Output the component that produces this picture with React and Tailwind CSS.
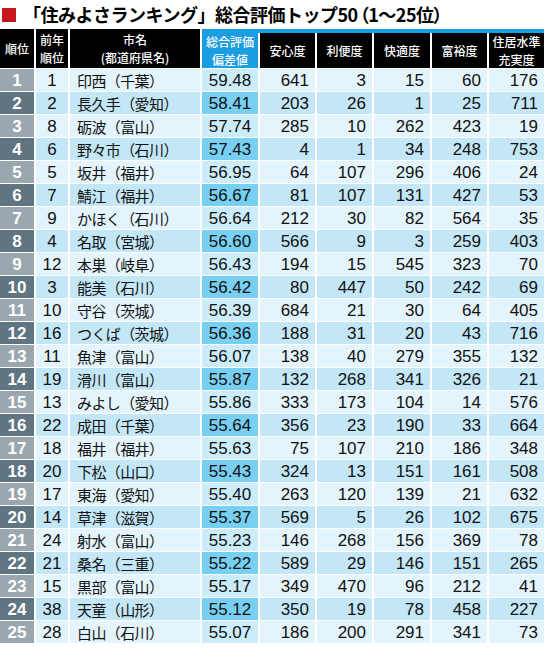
const rows = [
  [1, 1, '印西（千葉）', '59.48', 641, 3, 15, 60, 176],
  [2, 2, '長久手（愛知）', '58.41', 203, 26, 1, 25, 711],
  [3, 8, '砺波（富山）', '57.74', 285, 10, 262, 423, 19],
  [4, 6, '野々市（石川）', '57.43', 4, 1, 34, 248, 753],
  [5, 5, '坂井（福井）', '56.95', 64, 107, 296, 406, 24],
  [6, 7, '鯖江（福井）', '56.67', 81, 107, 131, 427, 53],
  [7, 9, 'かほく（石川）', '56.64', 212, 30, 82, 564, 35],
  [8, 4, '名取（宮城）', '56.60', 566, 9, 3, 259, 403],
  [9, 12, '本巣（岐阜）', '56.43', 194, 15, 545, 323, 70],
  [10, 3, '能美（石川）', '56.42', 80, 447, 50, 242, 69],
  [11, 10, '守谷（茨城）', '56.39', 684, 21, 30, 64, 405],
  [12, 16, 'つくば（茨城）', '56.36', 188, 31, 20, 43, 716],
  [13, 11, '魚津（富山）', '56.07', 138, 40, 279, 355, 132],
  [14, 19, '滑川（富山）', '55.87', 132, 268, 341, 326, 21],
  [15, 13, 'みよし（愛知）', '55.86', 333, 173, 104, 14, 576],
  [16, 22, '成田（千葉）', '55.64', 356, 23, 190, 33, 664],
  [17, 18, '福井（福井）', '55.63', 75, 107, 210, 186, 348],
  [18, 20, '下松（山口）', '55.43', 324, 13, 151, 161, 508],
  [19, 17, '東海（愛知）', '55.40', 263, 120, 139, 21, 632],
  [20, 14, '草津（滋賀）', '55.37', 569, 5, 26, 102, 675],
  [21, 24, '射水（富山）', '55.23', 146, 268, 156, 369, 78],
  [22, 21, '桑名（三重）', '55.22', 589, 29, 146, 151, 265],
  [23, 15, '黒部（富山）', '55.17', 349, 470, 96, 212, 41],
  [24, 38, '天童（山形）', '55.12', 350, 19, 78, 458, 227],
  [25, 28, '白山（石川）', '55.07', 186, 200, 291, 341, 73],
];

const jp = "font-['Noto_Sans_CJK_JP',sans-serif]";
const num = "font-['Liberation_Sans','Noto_Sans_CJK_JP',sans-serif]";
const grid = 'grid grid-cols-[34px_32px_130px_56px_55px_55px_56px_55px_55px] gap-x-[2px]';

function HeadCell({ lines, className = 'bg-black' }) {
  return (
    <div className={`flex flex-col items-center justify-center text-center text-[12px] font-medium leading-[17.5px] text-white ${className}`}>
      {lines.map((l) => (
        <span key={l} className="block">{l}</span>
      ))}
    </div>
  );
}

export default function App() {
  return (
    <div className={`h-[650px] w-[546px] overflow-hidden bg-white ${jp}`}>
      <div className="flex h-[29px] items-center pl-[2px]">
        <span className="h-[14px] w-[14px] bg-[#c8161d]" />
        <h1 className="ml-[7px] text-[18px] font-bold tracking-[-0.5px] text-black">
          「住みよさランキング」総合評価トップ50
          <span className="ml-[2px] [font-feature-settings:'palt']">（1〜25位）</span>
        </h1>
      </div>

      <div className={`${grid} h-[39px]`}>
        <HeadCell lines={['順位']} />
        <HeadCell lines={['前年', '順位']} />
        <HeadCell lines={['市名', '(都道府県名)']} />
        <div className="col-span-6 grid grid-cols-[56px_55px_55px_56px_55px_55px] gap-x-[2px] border-t-[4px] border-[#1b9de2]">
          <HeadCell lines={['総合評価', '偏差値']} className="bg-[#1b9de2]" />
          <HeadCell lines={['安心度']} />
          <HeadCell lines={['利便度']} />
          <HeadCell lines={['快適度']} />
          <HeadCell lines={['富裕度']} />
          <HeadCell lines={['住居水準', '充実度']} />
        </div>
      </div>

      <div className="mt-[1px] flex flex-col gap-y-[1px]">
        {rows.map((r) => {
          const even = r[0] % 2 === 0;
          const cell = even ? 'bg-[#c4e7f8]' : 'bg-[#e3f4fc]';
          return (
            <div key={r[0]} className={`${grid} h-[22px] text-[17px] leading-none text-[#111]`}>
              <div className={`flex items-center justify-center font-bold text-white ${num} ${even ? 'bg-[#5f7581]' : 'bg-[#9ba7ae]'}`}>
                {r[0]}
              </div>
              <div className={`flex items-center justify-center ${num} ${cell}`}>{r[1]}</div>
              <div className={`flex items-center pl-[7px] text-[15px] tracking-[-0.6px] ${cell}`}>{r[2]}</div>
              <div className={`flex items-center justify-center ${num} ${even ? 'bg-[#77cff1]' : 'bg-[#cbedfb]'}`}>{r[3]}</div>
              {r.slice(4).map((v, i) => (
                <div key={i} className={`flex items-center justify-end pr-[6px] ${num} ${cell}`}>
                  {v}
                </div>
              ))}
            </div>
          );
        })}
      </div>
    </div>
  );
}
